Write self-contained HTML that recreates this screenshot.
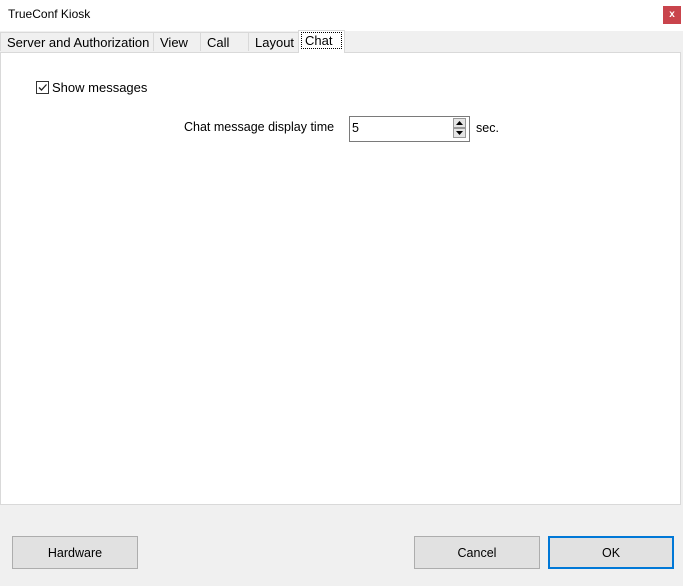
<!DOCTYPE html>
<html><head><style>
body{margin:0;width:683px;height:586px;background:#f0f0f0;font-family:"Liberation Sans",sans-serif;font-size:12px;color:#000;position:relative;overflow:hidden}
.a{position:absolute}
.tab{position:absolute;top:32px;height:19px;border:1px solid #d9d9d9;border-bottom:none;background:#f0f0f0;line-height:20px;padding-left:6px;box-sizing:border-box;font-size:13px;white-space:nowrap;overflow:hidden}
.btn{position:absolute;top:536px;height:33px;background:#e1e1e1;border:1px solid #adadad;box-sizing:border-box;text-align:center;line-height:32px;font-size:12.5px}
</style></head><body>
<div class="a" style="left:0;top:0;width:683px;height:31px;background:#fff"></div>
<div class="a" style="left:8px;top:7px;font-size:12px">TrueConf Kiosk</div>
<div class="a" style="left:663px;top:6px;width:18px;height:18px;background:#c9444c;color:#fff;font-size:10px;text-align:center;line-height:17px;font-weight:bold">x</div>
<div class="a" style="left:0;top:52px;width:681px;height:453px;background:#fff;border:1px solid #d9d9d9;box-sizing:border-box"></div>
<div class="tab" style="left:0;width:154px">Server and Authorization</div>
<div class="tab" style="left:153px;width:48px">View</div>
<div class="tab" style="left:200px;width:49px">Call</div>
<div class="tab" style="left:248px;width:51px">Layout</div>
<div class="a" style="left:298px;top:30px;width:47px;height:23px;background:#fff;border:1px solid #d9d9d9;border-bottom:none;box-sizing:border-box"></div>
<div class="a" style="left:301px;top:32px;width:41px;height:17px;border:1px dotted #000;box-sizing:border-box;line-height:15px;padding-left:3px;font-size:13px">Chat</div>
<div class="a" style="left:36px;top:81px;width:13px;height:13px;border:1px solid #333;box-sizing:border-box;background:#fff">
<svg width="11" height="11" style="position:absolute;left:0;top:0"><path d="M2 5.5L4.5 8L9.5 2.5" stroke="#222" stroke-width="1.3" fill="none"/></svg></div>
<div class="a" style="left:52px;top:80px;font-size:13px">Show messages</div>
<div class="a" style="left:184px;top:120px;font-size:12.5px">Chat message display time</div>
<div class="a" style="left:349px;top:116px;width:121px;height:26px;border:1px solid #7a7a7a;background:#fff;box-sizing:border-box"></div>
<div class="a" style="left:352px;top:121px;font-size:12.5px">5</div>
<div class="a" style="left:453px;top:118px;width:13px;height:10px;background:#e5e5e5;border:1px solid #999;box-sizing:border-box"><svg width="11" height="8" class="a"><path d="M2 6L5.5 2L9 6Z" fill="#000"/></svg></div>
<div class="a" style="left:453px;top:128px;width:13px;height:10px;background:#e5e5e5;border:1px solid #999;box-sizing:border-box"><svg width="11" height="8" class="a"><path d="M2 2L5.5 6L9 2Z" fill="#000"/></svg></div>
<div class="a" style="left:476px;top:121px;font-size:12.5px">sec.</div>
<div class="btn" style="left:12px;width:126px">Hardware</div>
<div class="btn" style="left:414px;width:126px">Cancel</div>
<div class="btn" style="left:548px;width:126px;border:2px solid #0078d7;line-height:30px">OK</div>
</body></html>
